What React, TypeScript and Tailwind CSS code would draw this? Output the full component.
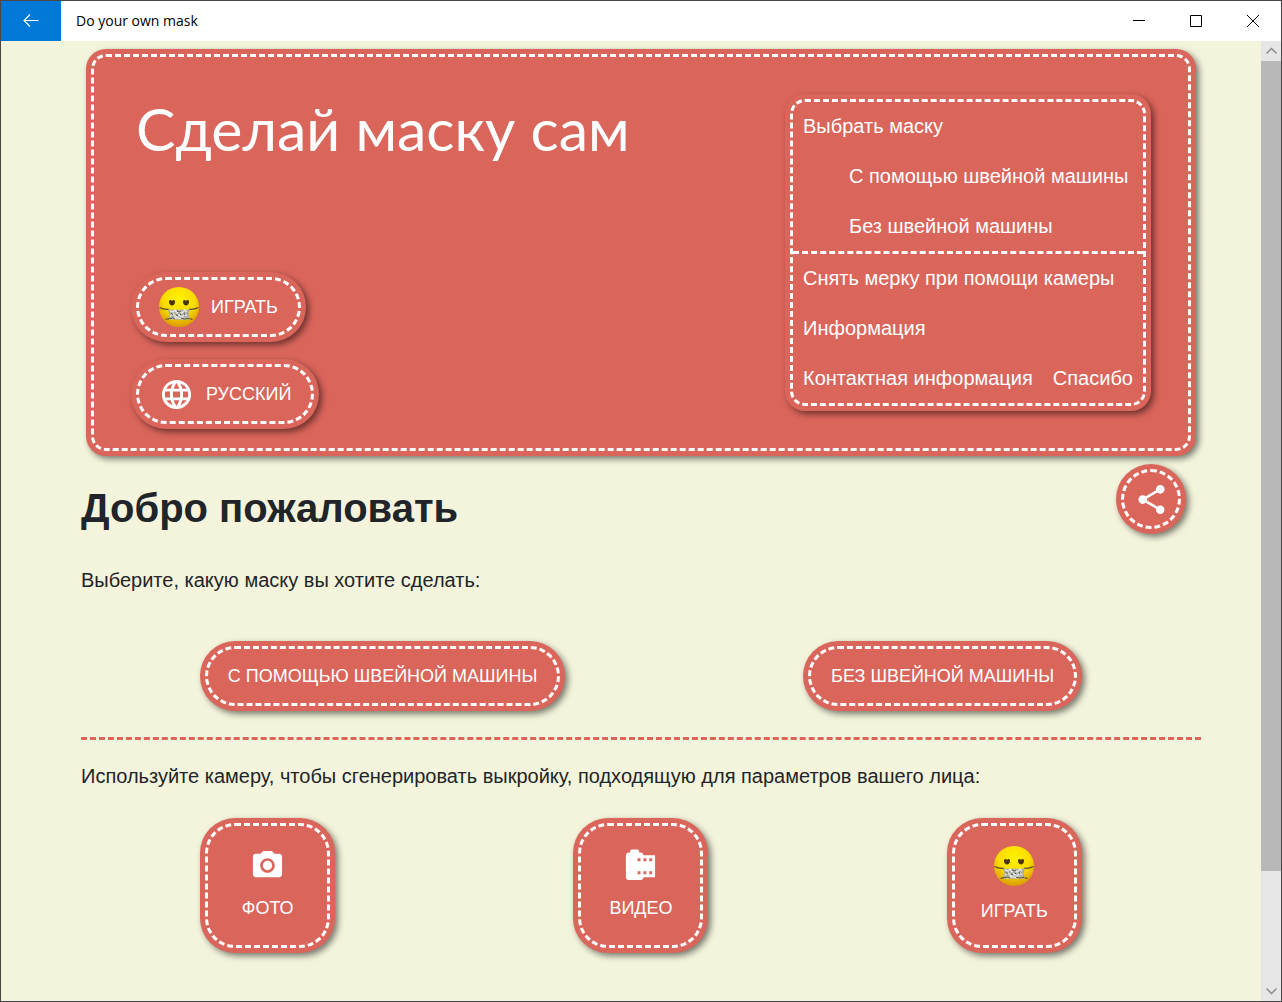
import type { ReactNode } from 'react';
import { MdCameraRoll, MdLanguage, MdPhotoCamera, MdShare } from 'react-icons/md';

const stitched =
  'border-[3px] border-dashed border-white bg-[#da655b] text-white shadow-[0_0_0_5px_#da655b,3px_3px_6px_5px_rgba(0,0,0,0.5)]';

const navLink = 'flex h-[50px] items-center pb-0.5';

const maskLinks = [
  { label: 'Выбрать маску', href: '#masks', nested: false },
  { label: 'С помощью швейной машины', href: '#machine', nested: true },
  { label: 'Без швейной машины', href: '#hand', nested: true },
];

function MaskedFace() {
  return (
    <svg viewBox="0 0 40 40" className="size-10 shrink-0" aria-hidden="true">
      <defs>
        <radialGradient id="face" cx="0.5" cy="0.3" r="0.7">
          <stop offset="0" stopColor="#fff200" />
          <stop offset="0.55" stopColor="#fbdc00" />
          <stop offset="1" stopColor="#d99b00" />
        </radialGradient>
      </defs>
      <circle cx="20" cy="20" r="20" fill="url(#face)" />
      <path d="M10 15c0-2.500 2.200-2.500 3-1 .8-1.500 3-1.500 3 1 0 2-1.500 3.500-3 3.500s-3-1.500-3-3.500z" fill="#4a3404" />
      <path d="M24 15c0-2.500 2.200-2.500 3-1 .8-1.500 3-1.500 3 1 0 2-1.500 3.500-3 3.500s-3-1.500-3-3.500z" fill="#4a3404" />
      <path
        d="M.5 20.500q5 2.400 9.500 1.600M39.500 20.500q-5 2.400-9.500 1.600M6.500 32.500l5-1.500M33.500 32.500l-5-1.500"
        fill="none"
        stroke="#584c2c"
        strokeWidth="1.2"
      />
      <path d="M9 22.300q5.500 1 11 .2 5.500.8 11-.2l-1.500 5.500 1.500 4.500q-11 .8-22 0l1.500-4.500z" fill="#a9aba3" />
      <path
        d="M11 24l3 1 2-2 2 3 3-2 2 2 3-3 2 2M11 29l3-2 3 3 3-2 3 2 3-3 2 2M10 31.500h5l3-1 3 1h8"
        fill="none"
        stroke="#e3e6e2"
        strokeWidth="1.5"
      />
      <path
        d="M12 26.500l2 1M18 24l2 1 2-1M17 28l2 1M25 26l1 2M9 32l5-1 2 1M22 31l3 1 5-.5M21 27l1 1"
        fill="none"
        stroke="#50483a"
      />
    </svg>
  );
}

function StitchButton({ icon, children }: { icon?: ReactNode; children: ReactNode }) {
  return (
    <button
      type="button"
      className={`mx-[5px] flex h-15 items-center gap-3 rounded-full px-5 text-lg uppercase ${stitched}`}
    >
      {icon}
      <span>{children}</span>
    </button>
  );
}

function TileButton({ icon, children }: { icon: ReactNode; children: ReactNode }) {
  return (
    <button
      type="button"
      className={`mx-[5px] flex size-[125px] flex-col items-center justify-center gap-2.5 rounded-[30px] text-lg leading-[30px] uppercase ${stitched}`}
    >
      {icon}
      <span>{children}</span>
    </button>
  );
}

function TitleBar() {
  return (
    <div className="flex h-10 items-stretch bg-white text-black">
      <button type="button" aria-label="Back" className="flex w-15 items-center justify-center bg-[#0078d7]">
        <svg viewBox="0 0 16 14" className="h-[14px] w-4" fill="none" stroke="white" strokeWidth="1.1">
          <path d="M15.500 6.500H1M7 .5L1 6.500l6 6" />
        </svg>
      </button>
      <span className="flex flex-1 items-center px-[15px] font-['Open_Sans',sans-serif] text-sm">Do your own mask</span>
      <button type="button" aria-label="Minimize" className="flex w-[57px] items-center justify-center">
        <svg viewBox="0 0 12 12" className="size-3" stroke="currentColor">
          <path d="M0 5.500h12" />
        </svg>
      </button>
      <button type="button" aria-label="Maximize" className="flex w-[57px] items-center justify-center">
        <svg viewBox="0 0 12 12" className="size-3" fill="none" stroke="currentColor">
          <path d="M.5.5h11v11H.5z" />
        </svg>
      </button>
      <button type="button" aria-label="Close" className="flex w-[57px] items-center justify-center">
        <svg viewBox="0 0 12 12" className="size-3" fill="none" stroke="currentColor">
          <path d="M0 0l12 12M12 0L0 12" />
        </svg>
      </button>
    </div>
  );
}

function ScrollBar() {
  return (
    <div className="flex w-5 flex-col bg-[#e6e6e6] text-[#858585]" aria-hidden="true">
      <svg viewBox="0 0 20 20" className="size-5" fill="none" stroke="currentColor" strokeWidth="1.3">
        <path d="M5.500 12.500l5-5 5 5" />
      </svg>
      <div className="grow-[22] basis-0 bg-[#b8b8b8]" />
      <div className="grow-[3] basis-0" />
      <svg viewBox="0 0 20 20" className="size-5" fill="none" stroke="currentColor" strokeWidth="1.3">
        <path d="M5.500 7.500l5 5 5-5" />
      </svg>
    </div>
  );
}

function Header() {
  return (
    <header className={`mx-[10px] flex justify-between rounded-[15px] px-[42px] pt-[42px] pb-6 ${stitched}`}>
      <div className="flex flex-col items-start justify-between">
        <p className="-mt-2.5 font-['Lato',sans-serif] text-[59px] leading-[80px]">Сделай маску сам</p>
        <div className="-mx-[5px] flex flex-col items-start gap-[27px]">
          <StitchButton icon={<MaskedFace />}>Играть</StitchButton>
          <StitchButton icon={<MdLanguage className="size-[35px]" />}>Русский</StitchButton>
        </div>
      </div>
      <nav className={`mb-[18px] rounded-[15px] text-xl ${stitched}`}>
        <ul className="-mb-px">
          {maskLinks.map((link) => (
            <li key={link.href}>
              <a href={link.href} className={`${navLink} pr-[14px] ${link.nested ? 'pl-14' : 'pl-[10px]'}`}>
                {link.label}
              </a>
            </li>
          ))}
        </ul>
        <ul className="-mb-px border-t-[3px] border-dashed border-white">
          <li>
            <a href="#measure" className={`${navLink} px-[10px]`}>Снять мерку при помощи камеры</a>
          </li>
          <li>
            <a href="#info" className={`${navLink} px-[10px]`}>Информация</a>
          </li>
          <li className="flex">
            <a href="#contact" className={`${navLink} px-[10px]`}>Контактная информация</a>
            <a href="#thanks" className={`${navLink} px-[10px]`}>Спасибо</a>
          </li>
        </ul>
      </nav>
    </header>
  );
}

export default function App() {
  return (
    <div className="flex min-h-screen flex-col border border-[#4a4648] bg-[#f4f4dc] font-['Liberation_Sans',Arial,sans-serif] text-[#212529]">
      <TitleBar />
      <div className="flex flex-1">
        <main className="min-w-0 flex-1 pt-[13px] pr-15 pl-20 text-xl leading-[30px]">
          <Header />
          <div className="mt-[18px] flex items-start justify-between pr-5">
            <h1 className="pt-[14px] text-[40px] leading-[50px] font-bold">Добро пожаловать</h1>
            <button type="button" aria-label="Поделиться" className={`flex size-15 items-center justify-center rounded-full ${stitched}`}>
              <MdShare className="size-[35px]" />
            </button>
          </div>
          <p className="mt-8">Выберите, какую маску вы хотите сделать:</p>
          <div className="mt-[51px] flex justify-around">
            <StitchButton>С помощью швейной машины</StitchButton>
            <StitchButton>Без швейной машины</StitchButton>
          </div>
          <hr className="mt-[31px] border-t-[3px] border-dashed border-[#da655b]" />
          <p className="mt-[21px]">Используйте камеру, чтобы сгенерировать выкройку, подходящую для параметров вашего лица:</p>
          <div className="mt-8 mb-10 flex justify-around">
            <TileButton icon={<MdPhotoCamera className="size-[35px]" />}>Фото</TileButton>
            <TileButton icon={<MdCameraRoll className="size-[35px]" />}>Видео</TileButton>
            <TileButton icon={<MaskedFace />}>Играть</TileButton>
          </div>
        </main>
        <ScrollBar />
      </div>
    </div>
  );
}
